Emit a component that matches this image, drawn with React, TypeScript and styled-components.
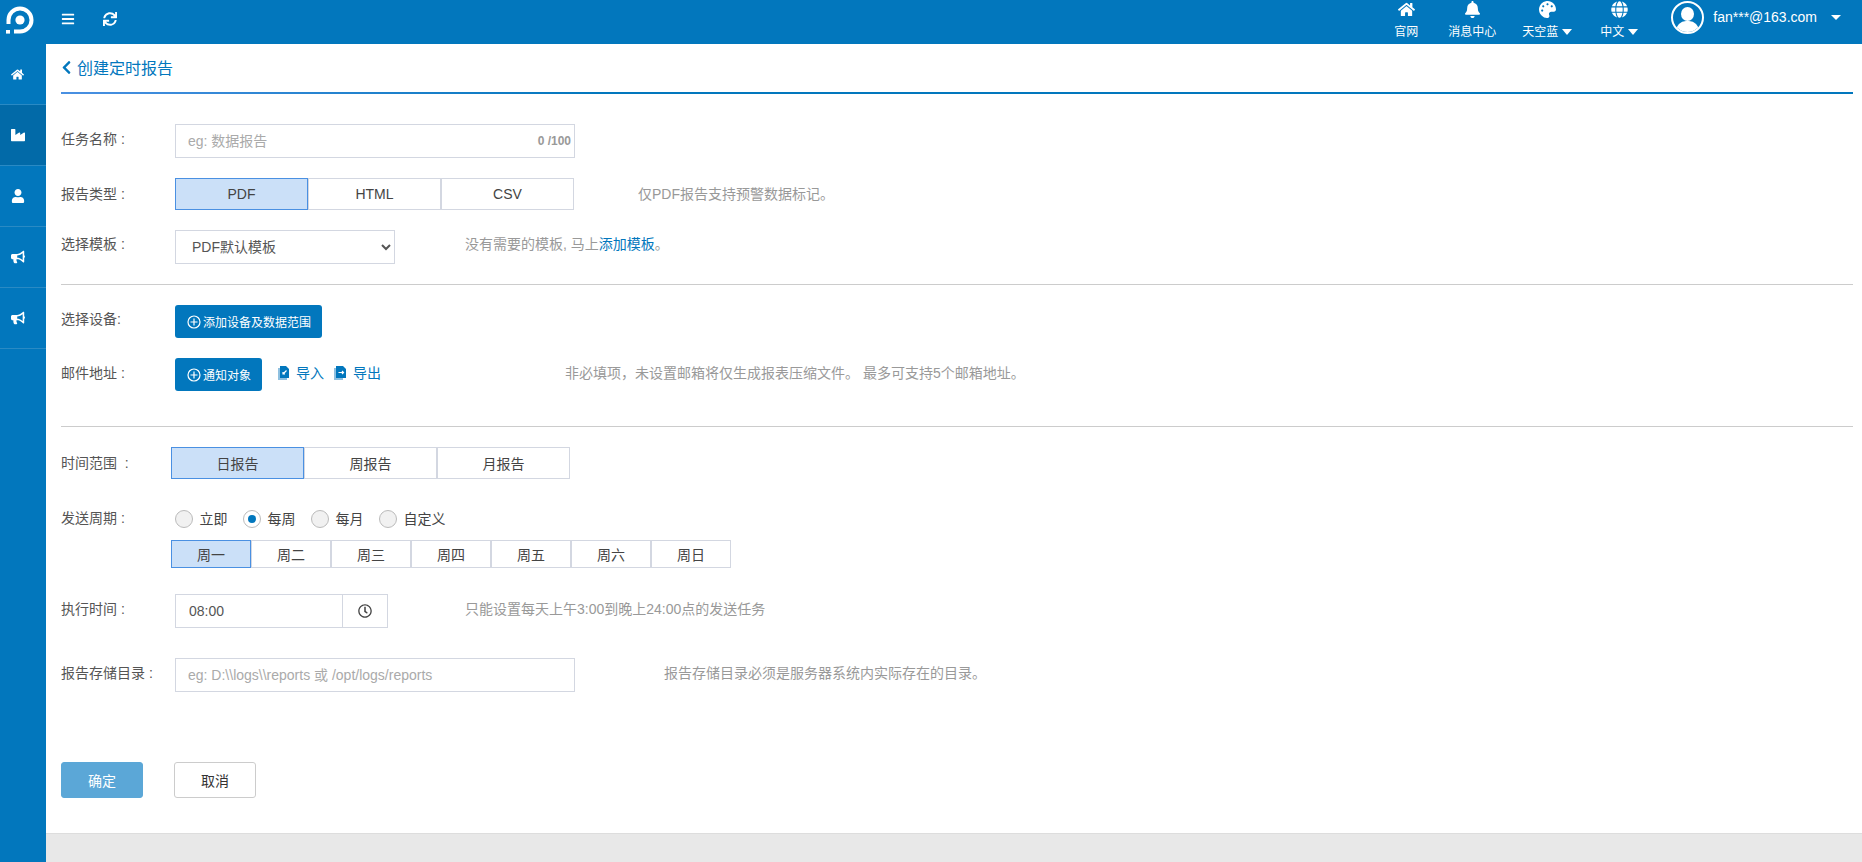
import styled, { createGlobalStyle } from "styled-components";
import {
  FaBars,
  FaBell,
  FaBullhorn,
  FaChevronLeft,
  FaGlobe,
  FaHome,
  FaIndustry,
  FaPalette,
  FaRegClock,
  FaSync,
  FaUser,
} from "react-icons/fa";

const BLUE = "#0277bd";
const BORDER = "#d3d7e1";

const GlobalStyle = createGlobalStyle`
  * { box-sizing: border-box; }
  html, body { margin: 0; padding: 0; height: 100%; }
  body {
    font-family: "Liberation Sans", "Noto Sans CJK SC", sans-serif;
    font-size: 14px;
    color: #555;
    overflow: hidden;
  }
`;

const Page = styled.div`
  display: flex;
  flex-direction: column;
  height: 862px;
`;

const TopBar = styled.header`
  display: flex;
  align-items: center;
  height: 44px;
  flex: none;
  background: ${BLUE};
  color: #fff;
`;

const Logo = styled.svg`
  width: 28px;
  height: 28px;
  margin: 0 0 4px 6px;
`;

const ToolIcon = styled.span<{ $left: number }>`
  display: flex;
  font-size: 14px;
  margin-left: ${(p) => p.$left}px;
  margin-top: -6px;
`;

const TopRight = styled.div`
  display: flex;
  align-items: flex-start;
  height: 100%;
  margin-left: auto;
`;

const TopLink = styled.div<{ $width: number; $left: number }>`
  display: flex;
  flex-direction: column;
  align-items: center;
  width: ${(p) => p.$width}px;
  margin-left: ${(p) => p.$left}px;
  padding-top: 1px;
  font-size: 12px;
  line-height: 16px;

  svg {
    display: block;
    width: 17px;
    height: 17px;
    margin-bottom: 6px;
  }
`;

const TopLabel = styled.span`
  display: flex;
  align-items: center;
  white-space: nowrap;
  gap: 4px;
  height: 16px;
`;

const Caret = styled.i<{ $size?: number }>`
  display: block;
  width: 0;
  height: 0;
  border-left: ${(p) => p.$size ?? 5.5}px solid transparent;
  border-right: ${(p) => p.$size ?? 5.5}px solid transparent;
  border-top: ${(p) => p.$size ?? 6}px solid #fff;
`;

const Avatar = styled.span`
  position: relative;
  width: 33px;
  height: 33px;
  margin: 1px 0 0 32px;
  border: 2px solid #fff;
  border-radius: 50%;
  overflow: hidden;

  &::before {
    content: "";
    position: absolute;
    left: 8px;
    top: 4px;
    width: 13px;
    height: 14px;
    border-radius: 50%;
    background: #fff;
  }

  &::after {
    content: "";
    position: absolute;
    left: 3px;
    top: 18px;
    width: 23px;
    height: 16px;
    border-radius: 10px 10px 0 0;
    background: #fff;
  }
`;

const UserName = styled.span`
  margin: 9px 0 0 9px;
  line-height: 16px;
  font-size: 14px;
`;

const UserCaret = styled.span`
  display: flex;
  margin: 15px 21px 0 14px;
`;

const Body = styled.div`
  display: flex;
  flex: 1;
  min-height: 0;
`;

const Sidebar = styled.nav`
  width: 46px;
  flex: none;
  background: ${BLUE};
`;

const SideItem = styled.div<{ $active?: boolean; $size?: number }>`
  display: flex;
  align-items: center;
  height: 61px;
  padding-left: 11px;
  color: #fff;
  font-size: ${(p) => p.$size ?? 14}px;
  background: ${(p) => (p.$active ? "#026aa8" : "transparent")};
  border-bottom: 1px solid #2a8ac4;
`;

const Main = styled.main`
  display: flex;
  flex-direction: column;
  flex: 1;
  min-width: 0;
`;

const Content = styled.div`
  height: 789px;
  flex: none;
  padding: 0 9px 0 15px;
  background: #fff;
`;

const Footer = styled.div`
  flex: 1;
  background: #e8e8e8;
  border-top: 1px solid #ddd;
`;

const TitleBar = styled.div`
  display: flex;
  align-items: center;
  gap: 3px;
  height: 50px;
  padding-bottom: 2px;
  color: ${BLUE};
  font-size: 16px;
  border-bottom: 2px solid;
  border-image: linear-gradient(to right, #4a90e2, ${BLUE} 30%) 1;

  svg {
    font-size: 15px;
    margin-left: -2px;
  }
`;

const Row = styled.div<{ $top: number; $height?: number }>`
  display: flex;
  align-items: center;
  margin-top: ${(p) => p.$top}px;
  height: ${(p) => (p.$height ? `${p.$height}px` : "auto")};
`;

const Label = styled.label<{ $lift?: number }>`
  width: 114px;
  flex: none;
  padding-bottom: ${(p) => p.$lift ?? 5}px;
  line-height: 16px;
  color: #555;
  white-space: pre;
`;

const FieldWrap = styled.div`
  position: relative;
  width: 400px;
  height: 34px;
`;

const TextField = styled.input`
  display: block;
  width: 100%;
  height: 34px;
  padding: 0 12px;
  font: inherit;
  color: #555;
  background: #fff;
  border: 1px solid ${BORDER};
  outline: none;

  &::placeholder {
    color: #aaa;
    opacity: 1;
  }
`;

const Counter = styled.span`
  position: absolute;
  right: 4px;
  top: 9px;
  font-size: 12px;
  line-height: 16px;
  font-weight: bold;
  color: #999;
`;

const Segments = styled.div<{ $shift?: number }>`
  display: flex;
  margin-left: ${(p) => p.$shift ?? 0}px;
`;

const Segment = styled.button<{ $active?: boolean; $width: number; $height: number }>`
  width: ${(p) => p.$width}px;
  height: ${(p) => p.$height}px;
  padding: 0;
  font: inherit;
  color: #444;
  background: ${(p) => (p.$active ? "#cbe0f8" : "#fff")};
  border: 1px solid ${(p) => (p.$active ? "#4a90e2" : BORDER)};
`;

const Hint = styled.span<{ $left: number; $lift?: number }>`
  margin-left: ${(p) => p.$left}px;
  padding-bottom: ${(p) => p.$lift ?? 5}px;
  line-height: 16px;
  color: #999;
  white-space: pre;

  a {
    color: ${BLUE};
    text-decoration: none;
  }
`;

const TemplateSelect = styled.select`
  width: 220px;
  height: 34px;
  padding-left: 12px;
  font: inherit;
  color: #555;
  background: #fff;
  border: 1px solid ${BORDER};
  border-radius: 0;
  outline: none;
`;

const Divider = styled.hr<{ $top: number }>`
  height: 1px;
  margin: ${(p) => p.$top}px 0 0;
  background: #ccc;
  border: 0;
`;

const PrimaryButton = styled.button`
  display: flex;
  align-items: center;
  gap: 2px;
  height: 33px;
  padding: 0 11px 0 12px;
  font: inherit;
  font-size: 12px;
  color: #fff;
  background: ${BLUE};
  border: 0;
  border-radius: 3px;
`;

const FileLink = styled.a<{ $left: number }>`
  display: flex;
  align-items: center;
  gap: 6px;
  margin-left: ${(p) => p.$left}px;
  padding-bottom: 4px;
  line-height: 16px;
  color: ${BLUE};
  text-decoration: none;
`;

const RadioRow = styled.div`
  display: flex;
  align-items: center;
  gap: 15.5px;
`;

const RadioItem = styled.span`
  display: flex;
  align-items: center;
  gap: 6.5px;
  line-height: 18px;
  color: #444;
`;

const RadioDot = styled.span<{ $checked?: boolean }>`
  position: relative;
  width: 18px;
  height: 18px;
  border-radius: 50%;
  border: 1px solid #bbb;
  background: ${(p) => (p.$checked ? "#fff" : "#f1f1f1")};

  &::after {
    content: "";
    display: ${(p) => (p.$checked ? "block" : "none")};
    position: absolute;
    left: 4px;
    top: 4px;
    width: 8px;
    height: 8px;
    border-radius: 50%;
    background: ${BLUE};
  }
`;

const TimeBox = styled.div`
  display: flex;
  width: 213px;
  height: 34px;
  border: 1px solid ${BORDER};
`;

const TimeInput = styled.input`
  width: 167px;
  padding: 0 12px 0 13px;
  font: inherit;
  color: #555;
  border: 0;
  border-right: 1px solid ${BORDER};
  outline: none;
`;

const TimeAddon = styled.span`
  display: flex;
  flex: 1;
  align-items: center;
  justify-content: center;
  font-size: 14px;
  color: #444;
`;

const Actions = styled.div`
  display: flex;
  gap: 31px;
  margin-top: 70px;
`;

const ActionButton = styled.button<{ $primary?: boolean }>`
  width: 82px;
  height: 36px;
  padding: 0;
  font: inherit;
  color: ${(p) => (p.$primary ? "#fff" : "#333")};
  background: ${(p) => (p.$primary ? "#5ba7d7" : "#fff")};
  border: 1px solid ${(p) => (p.$primary ? "#5ba7d7" : "#ccc")};
  border-radius: 3px;
`;

const PlusCircle = () => (
  <svg width="14" height="14" viewBox="0 0 14 14" fill="none" stroke="currentColor" strokeWidth="1.2">
    <circle cx="7" cy="7" r="6" />
    <path d="M7 3.5v7M3.5 7h7" />
  </svg>
);

const ImportIcon = () => (
  <svg width="12" height="14" viewBox="0 0 12 14">
    <path d="M0 2h2v10h7v2H0z" fill="#8fc0e0" />
    <path d="M2 0h6l3 3v9H2z" fill="currentColor" />
    <path d="M8.5 4.5L5 8M5 6v2h2" stroke="#fff" strokeWidth="1.2" fill="none" />
  </svg>
);

const ExportIcon = () => (
  <svg width="13" height="14" viewBox="0 0 13 14">
    <path d="M0 2h2v10h7v2H0z" fill="#8fc0e0" />
    <path d="M2 0h7l3 3v9H2z" fill="currentColor" />
    <path d="M4.5 6.5h5M8 5l1.5 1.5L8 8" stroke="#fff" strokeWidth="1.2" fill="none" />
  </svg>
);

const sideIcons = [FaIndustry, FaUser, FaBullhorn, FaBullhorn];
const reportTypes = ["PDF", "HTML", "CSV"];
const ranges = ["日报告", "周报告", "月报告"];
const cycles = ["立即", "每周", "每月", "自定义"];
const weekdays = ["周一", "周二", "周三", "周四", "周五", "周六", "周日"];

export default function App() {
  return (
    <Page>
      <GlobalStyle />
      <TopBar>
        <Logo viewBox="0 0 28 28">
          <path
            d="M2.5 18 V14 A11.5 11.5 0 1 1 14 25.5 H8"
            fill="none"
            stroke="#fff"
            strokeWidth="4"
          />
          <circle cx="14" cy="14" r="4.6" fill="#fff" />
          <rect x="0" y="24" width="4" height="3.6" fill="#fff" />
        </Logo>
        <ToolIcon $left={27}>
          <FaBars />
        </ToolIcon>
        <ToolIcon $left={28}>
          <FaSync />
        </ToolIcon>
        <TopRight>
          <TopLink $width={48} $left={0}>
            <FaHome />
            <TopLabel>官网</TopLabel>
          </TopLink>
          <TopLink $width={48} $left={18}>
            <FaBell />
            <TopLabel>消息中心</TopLabel>
          </TopLink>
          <TopLink $width={52} $left={25}>
            <FaPalette />
            <TopLabel>
              天空蓝
              <Caret />
            </TopLabel>
          </TopLink>
          <TopLink $width={40} $left={26}>
            <FaGlobe />
            <TopLabel>
              中文
              <Caret />
            </TopLabel>
          </TopLink>
          <Avatar />
          <UserName>fan***@163.com</UserName>
          <UserCaret>
            <Caret $size={5} />
          </UserCaret>
        </TopRight>
      </TopBar>

      <Body>
        <Sidebar>
          <SideItem $size={13}>
            <FaHome />
          </SideItem>
          {sideIcons.map((Icon, i) => (
            <SideItem key={i} $active={i === 0}>
              <Icon />
            </SideItem>
          ))}
        </Sidebar>

        <Main>
          <Content>
            <TitleBar>
              <FaChevronLeft />
              创建定时报告
            </TitleBar>

            <Row $top={30}>
              <Label>任务名称 :</Label>
              <FieldWrap>
                <TextField placeholder="eg: 数据报告" />
                <Counter>0 /100</Counter>
              </FieldWrap>
            </Row>

            <Row $top={20}>
              <Label $lift={1}>报告类型 :</Label>
              <Segments>
                {reportTypes.map((t, i) => (
                  <Segment key={t} $active={i === 0} $width={133} $height={32}>
                    {t}
                  </Segment>
                ))}
              </Segments>
              <Hint $left={64} $lift={1}>
                仅PDF报告支持预警数据标记。
              </Hint>
            </Row>

            <Row $top={20}>
              <Label $lift={6}>选择模板 :</Label>
              <TemplateSelect defaultValue="PDF默认模板">
                <option>PDF默认模板</option>
              </TemplateSelect>
              <Hint $left={70} $lift={6}>
                没有需要的模板, 马上<a href="#">添加模板</a>。
              </Hint>
            </Row>

            <Divider $top={20} />

            <Row $top={20}>
              <Label>选择设备:</Label>
              <PrimaryButton>
                <PlusCircle />
                添加设备及数据范围
              </PrimaryButton>
            </Row>

            <Row $top={20}>
              <Label $lift={3}>邮件地址 :</Label>
              <PrimaryButton>
                <PlusCircle />
                通知对象
              </PrimaryButton>
              <FileLink href="#" $left={16}>
                <ImportIcon />
                导入
              </FileLink>
              <FileLink href="#" $left={10}>
                <ExportIcon />
                导出
              </FileLink>
              <Hint $left={184} $lift={3}>
                非必填项，未设置邮箱将仅生成报表压缩文件。 最多可支持5个邮箱地址。
              </Hint>
            </Row>

            <Divider $top={35} />

            <Row $top={20}>
              <Label $lift={1}>时间范围  :</Label>
              <Segments $shift={-4}>
                {ranges.map((t, i) => (
                  <Segment key={t} $active={i === 0} $width={133} $height={32}>
                    {t}
                  </Segment>
                ))}
              </Segments>
            </Row>

            <Row $top={31} $height={18}>
              <Label $lift={3}>发送周期 :</Label>
              <RadioRow>
                {cycles.map((c, i) => (
                  <RadioItem key={c}>
                    <RadioDot $checked={i === 1} />
                    {c}
                  </RadioItem>
                ))}
              </RadioRow>
            </Row>

            <Row $top={12}>
              <Label />
              <Segments $shift={-4}>
                {weekdays.map((d, i) => (
                  <Segment key={d} $active={i === 0} $width={80} $height={28}>
                    {d}
                  </Segment>
                ))}
              </Segments>
            </Row>

            <Row $top={26}>
              <Label>执行时间 :</Label>
              <TimeBox>
                <TimeInput defaultValue="08:00" />
                <TimeAddon>
                  <FaRegClock />
                </TimeAddon>
              </TimeBox>
              <Hint $left={77}>只能设置每天上午3:00到晚上24:00点的发送任务</Hint>
            </Row>

            <Row $top={30}>
              <Label>报告存储目录 :</Label>
              <FieldWrap>
                <TextField placeholder="eg: D:\\logs\\reports 或 /opt/logs/reports" />
              </FieldWrap>
              <Hint $left={89}>报告存储目录必须是服务器系统内实际存在的目录。</Hint>
            </Row>

            <Actions>
              <ActionButton $primary>确定</ActionButton>
              <ActionButton>取消</ActionButton>
            </Actions>
          </Content>
          <Footer />
        </Main>
      </Body>
    </Page>
  );
}
